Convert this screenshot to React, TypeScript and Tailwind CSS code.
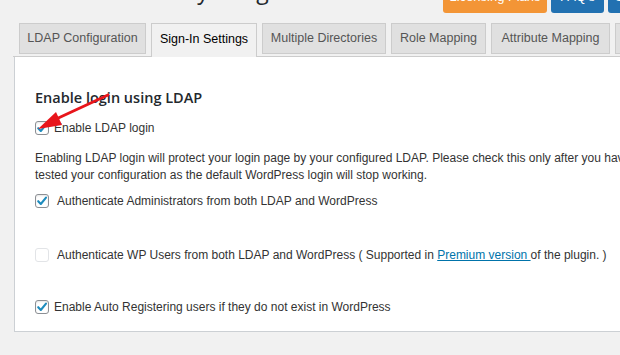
import React from 'react';

const font = { fontFamily: '"Liberation Sans", Arial, sans-serif' };
const headFont = { fontFamily: '"Open Sans", "Noto Sans", Arial, sans-serif' };

function Check({ checked, disabled }: { checked?: boolean; disabled?: boolean }) {
  return (
    <span
      className={`inline-flex h-[14px] w-[14px] shrink-0 items-center justify-center rounded-[3px] border bg-white ${
        disabled ? 'border-[#e2e4e7]' : 'border-[#8c8f94] shadow-[inset_0_1px_2px_rgba(0,0,0,0.1)]'
      }`}
    >
      {checked && (
        <svg width="12" height="12" viewBox="0 0 12 12">
          <path d="M2.2 6.2 L4.8 9 L10 2.6" fill="none" stroke="#1e8cbe" strokeWidth="2.1" strokeLinecap="round" strokeLinejoin="round" />
        </svg>
      )}
    </span>
  );
}

const tabs = [
  { label: 'LDAP Configuration', w: 'w-[127px]' },
  { label: 'Sign-In Settings', w: 'w-[106px]', active: true },
  { label: 'Multiple Directories', w: 'w-[124px]' },
  { label: 'Role Mapping', w: 'w-[95px]' },
  { label: 'Attribute Mapping', w: 'w-[119px]' },
  { label: 'Users Report', w: 'w-[110px]' },
];

export default function App() {
  return (
    <div className="relative h-[355px] w-[620px] overflow-hidden bg-[#f1f1f1] text-[12px] text-[#444]" style={font}>
      <div className="flex h-[23px] items-start overflow-hidden">
        <div className="w-[443px] shrink-0 overflow-hidden">
          <div className="-mt-[27px] ml-[40px] whitespace-nowrap text-[23px] text-[#23282d]" style={headFont}>
            Active Directory Integration for Intranet sites
          </div>
        </div>
        <div className="-mt-[19px] flex shrink-0 gap-[4px]">
          <button className="h-[32px] w-[104px] rounded-[3px] bg-[#f39536] text-[13px] text-white">Licensing Plans</button>
          <button className="h-[32px] w-[53px] rounded-[3px] bg-[#2271b1] text-[13px] text-white">FAQ's</button>
          <button className="h-[32px] w-[60px] rounded-[3px] bg-[#2271b1] text-[13px] text-white">Support</button>
        </div>
      </div>

      <div className="ml-[13px] flex h-[34px] items-start gap-[5px] border-b border-[#ccc] pl-[6px]">
        {tabs.map((t) => (
          <div
            key={t.label}
            className={`${t.w} flex shrink-0 items-center justify-center whitespace-nowrap border border-[#ccc] text-[12.5px] ${
              t.active ? 'h-[34px] border-b-0 bg-[#f1f1f1] pb-[3px] text-[#000]' : 'h-[31px] bg-[#e0e0e0] text-[#555]'
            }`}
          >
            {t.label}
          </div>
        ))}
      </div>

      <div className="ml-[14px] border-b border-l border-[#ccd0d4] bg-white pb-[14px] pl-[20px] pt-[31px]">
        <h2 className="text-[14.5px] font-semibold leading-[20px] text-[#23282d]" style={headFont}>
          Enable login using LDAP
        </h2>
        <label className="mt-[10px] flex h-[20px] items-center gap-[5px] text-[#333]">
          <Check checked />
          <span>Enable LDAP login</span>
        </label>
        <p className="mt-[12px] whitespace-nowrap leading-[17px] text-[#333]">
          Enabling LDAP login will protect your login page by your configured LDAP. Please check this only after you have
          <br />
          tested your configuration as the default WordPress login will stop working.
        </p>
        <label className="mt-[7px] flex h-[20px] items-center gap-[8px] text-[#333]">
          <Check checked />
          <span>Authenticate Administrators from both LDAP and WordPress</span>
        </label>
        <label className="mt-[34px] flex h-[20px] items-center gap-[8px] whitespace-nowrap text-[#333]">
          <Check disabled />
          <span>
            Authenticate WP Users from both LDAP and WordPress ( Supported in{' '}
            <a className="text-[#0073aa] underline">Premium version </a>of the plugin. )
          </span>
        </label>
        <label className="mt-[32px] flex h-[20px] items-center gap-[5px] text-[#333]">
          <Check checked />
          <span>Enable Auto Registering users if they do not exist in WordPress</span>
        </label>
      </div>

      <svg className="pointer-events-none absolute left-0 top-0" width="620" height="355">
        <line x1="108" y1="95" x2="54" y2="120" stroke="#e8151b" strokeWidth="3" strokeLinecap="round" />
        <polygon points="38,129 56,112 62,125" fill="#e8151b" />
      </svg>
    </div>
  );
}
